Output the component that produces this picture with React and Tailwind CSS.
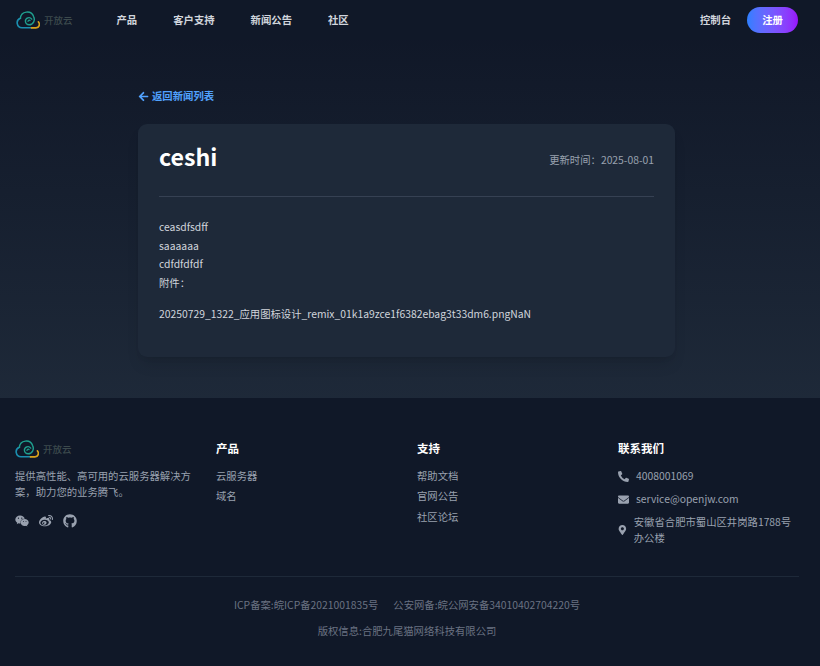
import { FaWeixin, FaWeibo, FaGithub, FaPhoneAlt, FaEnvelope, FaMapMarkerAlt, FaArrowLeft } from 'react-icons/fa'

function Logo() {
  return (
    <div className="flex items-center h-[20px]">
      <svg width="26" height="18" viewBox="0 0 26 18" fill="none" strokeLinecap="round">
        <path d="M15.5 16.8H6a4.9 4.9 0 0 1-1.6-9.5" stroke="#1b8fb0" strokeWidth="1.6" />
        <path d="M4.4 7.3A6.8 6.8 0 0 1 17.6 5.6c1.9 3.6-.4 8.2-4.5 8.2a3.7 3.7 0 0 1-3.7-3.7 3.5 3.5 0 0 1 6.3-2" stroke="#1fa08f" strokeWidth="1.4" />
        <path d="M12 10.4a1.2 1.2 0 0 1 2-.9" stroke="#1fa08f" strokeWidth="1.2" />
        <path d="M15.5 16.8H20a3.5 3.5 0 0 0 2.4-6" stroke="#d9a21b" strokeWidth="1.7" />
      </svg>
      <span className="ml-[2px] text-[9.5px] font-medium text-[#3c4a4d]">开放云</span>
    </div>
  )
}

export default function App() {
  return (
    <div className="min-h-[666px] bg-gray-900 font-['Noto_Sans_CJK_SC','Noto_Sans',sans-serif]">
      {/* Header */}
      <header className="h-[40px] pl-[16px] pr-[22px] flex items-center">
        <Logo />
        <nav className="ml-[44px] flex items-center gap-[36px] text-[10.35px] font-semibold text-gray-300">
          <span>产品</span>
          <span>客户支持</span>
          <span>新闻公告</span>
          <span>社区</span>
        </nav>
        <div className="ml-auto flex items-center gap-[16px]">
          <span className="text-[10.35px] font-semibold text-gray-300">控制台</span>
          <button className="w-[51px] h-[26px] rounded-full bg-gradient-to-r from-blue-500 to-purple-600 text-[10.35px] font-semibold text-white">
            注册
          </button>
        </div>
      </header>

      {/* News detail */}
      <main className="h-[358px] bg-gradient-to-b from-gray-900 to-gray-800 pt-[48px] pl-[138px]">
        <a className="flex items-center gap-[3px] text-[10.35px] font-semibold text-blue-400 h-[16px]">
          <FaArrowLeft size={11} />
          返回新闻列表
        </a>
        <article className="mt-[20px] w-[537px] h-[233px] rounded-[9px] bg-gray-800 shadow-lg px-[21px] pt-[16px]">
          <div className="flex items-start justify-between h-[38px]">
            <h1 className="text-[23.2px] font-bold text-white leading-[32px]">ceshi</h1>
            <span className="mt-[12px] text-[10.35px] leading-[16px] text-gray-400">更新时间：2025-08-01</span>
          </div>
          <div className="mt-[18px] border-t border-gray-700" />
          <div className="mt-[21px] text-[10.35px] leading-[18.5px] text-gray-300">
            <p>ceasdfsdff</p>
            <p>saaaaaa</p>
            <p>cdfdfdfdf</p>
            <p>附件：</p>
            <p className="mt-[13px]">20250729_1322_应用图标设计_remix_01k1a9zce1f6382ebag3t33dm6.pngNaN</p>
          </div>
        </article>
      </main>

      {/* Footer */}
      <footer className="h-[268px] pl-[15px] pr-[21px] pt-[41px]">
        <div className="grid grid-cols-4 gap-[20px] h-[137px]">
          <div>
            <Logo />
            <p className="mt-[9px] text-[10.35px] leading-[15.5px] text-gray-400">提供高性能、高可用的云服务器解决方案，助力您的业务腾飞。</p>
            <div className="mt-[15px] flex items-center gap-[10px] text-gray-400">
              <FaWeixin size={14} />
              <FaWeibo size={14} />
              <FaGithub size={14} />
            </div>
          </div>
          <div>
            <h3 className="text-[11.5px] font-bold text-white leading-[18px]">产品</h3>
            <ul className="mt-[11px] space-y-[4.3px] text-[10.35px] leading-[16px] text-gray-400">
              <li>云服务器</li>
              <li>域名</li>
            </ul>
          </div>
          <div>
            <h3 className="text-[11.5px] font-bold text-white leading-[18px]">支持</h3>
            <ul className="mt-[11px] space-y-[4.3px] text-[10.35px] leading-[16px] text-gray-400">
              <li>帮助文档</li>
              <li>官网公告</li>
              <li>社区论坛</li>
            </ul>
          </div>
          <div>
            <h3 className="text-[11.5px] font-bold text-white leading-[18px]">联系我们</h3>
            <ul className="mt-[11px] space-y-[7px] text-[10.35px] leading-[16px] text-gray-400">
              <li className="flex items-center gap-[7px]"><FaPhoneAlt size={11} />4008001069</li>
              <li className="flex items-center gap-[7px]"><FaEnvelope size={11} />service@openjw.com</li>
              <li className="flex items-center gap-[7px]"><FaMapMarkerAlt size={10} /><span>安徽省合肥市蜀山区井岗路1788号办公楼</span></li>
            </ul>
          </div>
        </div>
        <div className="border-t border-gray-800 pt-[20px] text-center text-[10.35px] text-gray-500">
          <p className="leading-[16px]"><span>ICP备案:皖ICP备2021001835号</span><span className="ml-[15px]">公安网备:皖公网安备34010402704220号</span></p>
          <p className="mt-[10px] leading-[16px]">版权信息:合肥九尾猫网络科技有限公司</p>
        </div>
      </footer>
    </div>
  )
}
